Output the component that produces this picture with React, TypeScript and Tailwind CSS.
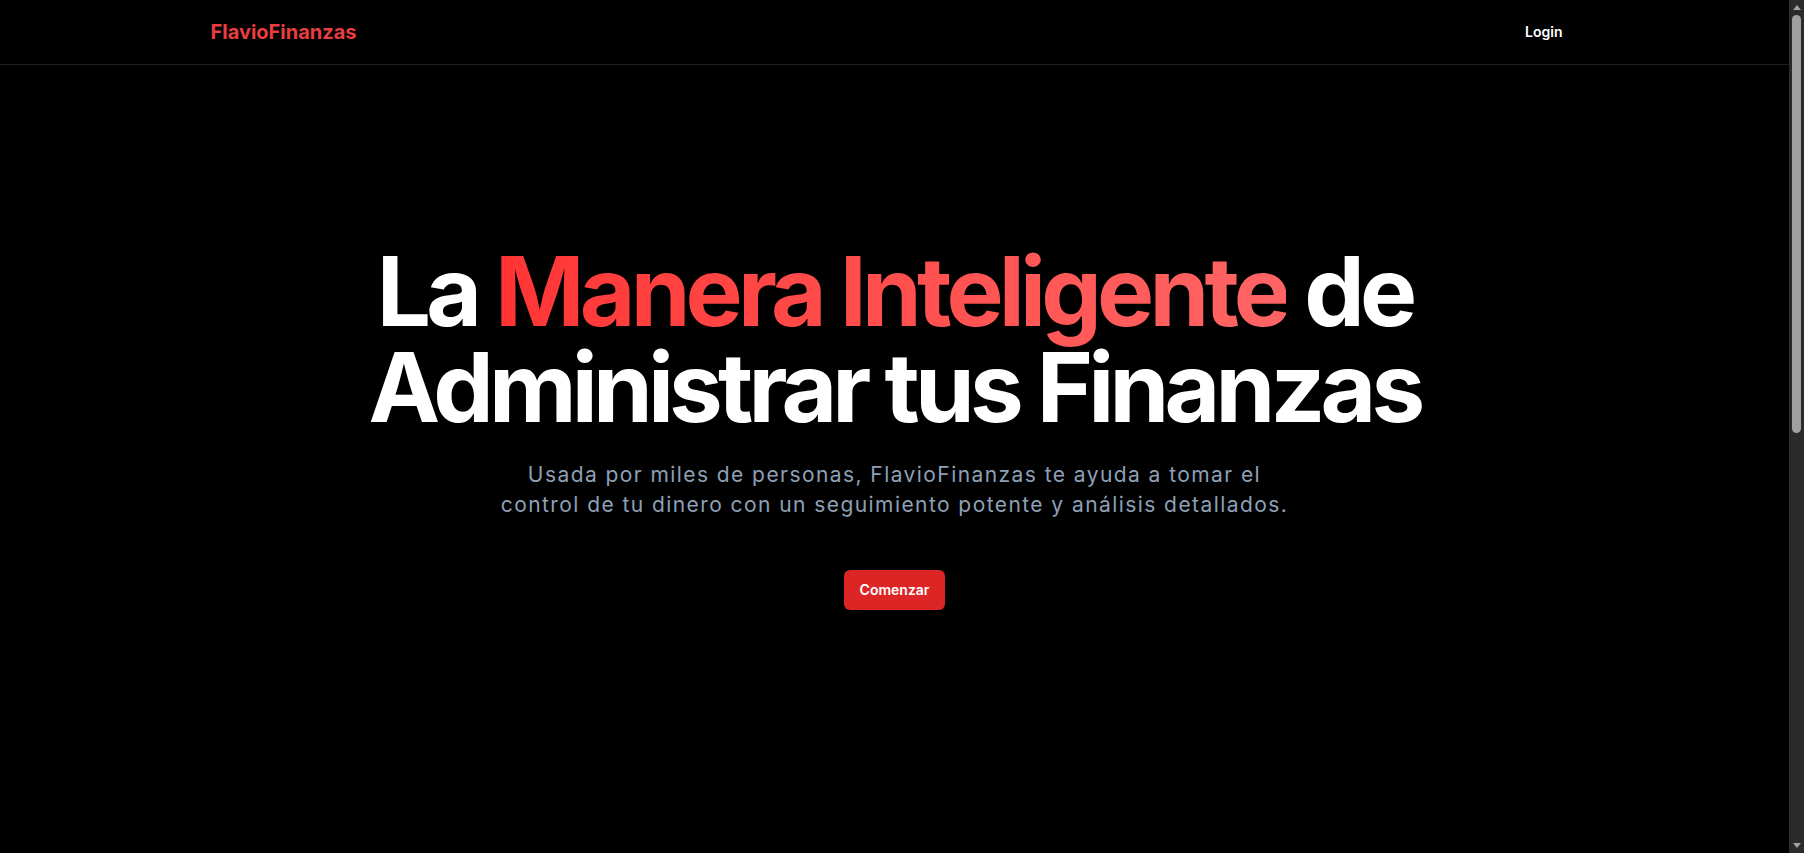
export default function App() {
  return (
    <div
      className="flex h-screen overflow-hidden bg-black text-white"
      style={{ fontFamily: "Inter, 'Noto Sans', sans-serif" }}
    >
      <div className="min-w-0 flex-1">
        <header className="border-b border-[#1f1f1f]">
          <nav className="mx-auto flex h-16 max-w-[1400px] items-center justify-between px-4">
            <a href="#" className="text-xl font-bold text-[#e83e40]">
              FlavioFinanzas
            </a>
            <button className="h-10 rounded-md px-4 text-sm font-semibold text-white">Login</button>
          </nav>
        </header>

        <main>
          <section className="mx-auto flex max-w-[1400px] flex-col items-center px-4 pt-[178px] text-center">
            <h1 className="text-8xl font-bold leading-none tracking-tighter">
              La{" "}
              <span className="bg-gradient-to-r from-[#ff3434] to-[#ff6464] bg-clip-text text-transparent">
                Manera Inteligente
              </span>{" "}
              de
              <br />
              Administrar tus Finanzas
            </h1>
            <p className="mt-[25px] max-w-[800px] text-[21px] leading-[30px] tracking-[0.068em] text-[#8ea0b6]">
              Usada por miles de personas, FlavioFinanzas te ayuda a tomar el control de tu dinero con un
              seguimiento potente y análisis detallados.
            </p>
            <button className="mt-[50px] h-10 rounded-md bg-[#dc2626] px-4 text-sm font-semibold text-white">
              Comenzar
            </button>
          </section>
        </main>
      </div>

      {/* browser scrollbar as seen in the capture */}
      <aside className="flex w-[15px] shrink-0 flex-col items-center bg-[#2b2b2b]">
        <div className="flex h-[15px] items-center justify-center">
          <svg width="8" height="5" viewBox="0 0 8 5" aria-hidden="true">
            <path d="M0 5 L4 0 L8 5 Z" fill="#a3a3a3" />
          </svg>
        </div>
        <div className="h-[418px] w-[9px] rounded-full bg-[#9f9f9f]" />
        <div className="flex-1" />
        <div className="flex h-[15px] items-center justify-center">
          <svg width="8" height="5" viewBox="0 0 8 5" aria-hidden="true">
            <path d="M0 0 L8 0 L4 5 Z" fill="#a3a3a3" />
          </svg>
        </div>
      </aside>
    </div>
  )
}
